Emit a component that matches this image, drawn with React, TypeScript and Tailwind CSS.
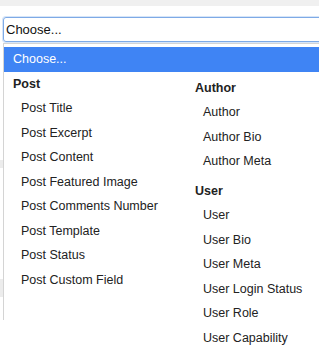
const groupsLeft = [
  {
    label: 'Post',
    items: [
      'Post Title',
      'Post Excerpt',
      'Post Content',
      'Post Featured Image',
      'Post Comments Number',
      'Post Template',
      'Post Status',
      'Post Custom Field',
    ],
  },
]

const groupsRight = [
  { label: 'Author', items: ['Author', 'Author Bio', 'Author Meta'] },
  {
    label: 'User',
    items: ['User', 'User Bio', 'User Meta', 'User Login Status', 'User Role', 'User Capability'],
  },
]

type Group = { label: string; items: string[] }

function OptGroup({ group, first }: { group: Group; first?: boolean }) {
  return (
    <div className={first ? '' : 'mt-[5px]'}>
      <div className="h-[24.5px] flex items-center pl-[9px] font-bold text-[#222]">{group.label}</div>
      {group.items.map((item) => (
        <div key={item} className="h-[24.5px] flex items-center pl-[17px] text-[#222] whitespace-nowrap">
          {item}
        </div>
      ))}
    </div>
  )
}

export default function App() {
  return (
    <div
      className="relative w-[319px] h-[357px] overflow-hidden bg-white text-[12.5px]"
      style={{ fontFamily: '"Liberation Sans", Arial, sans-serif' }}
    >
      {/* page strip at top */}
      <div className="h-[6px] bg-[#f0f0f0]" />

      <div className="pl-[3px] pt-[11px]">
        {/* select box */}
        <div className="h-[25px] w-[330px] rounded-[3px] border border-[#7eaae6] shadow-[0_0_0_1px_#d6e5f8] flex items-center pl-[2px] text-[13px] text-[#111]">
          Choose...
        </div>

        <div className="flex">
          {/* dropdown list */}
          <div className="mt-[1px] w-[340px] h-[277px] border-l border-t border-[#d4d4d4] pt-[3px]">
            <div className="h-[25px] ml-[0px] bg-[#3f84f4] text-white flex items-center pl-[9px]">Choose...</div>
            <div className="flex">
              <div className="w-[182px]">
                {groupsLeft.map((g, i) => (
                  <OptGroup key={g.label} group={g} first={i === 0} />
                ))}
              </div>
              <div className="pt-[4px]">
                {groupsRight.map((g, i) => (
                  <OptGroup key={g.label} group={g} first={i === 0} />
                ))}
              </div>
            </div>
          </div>
        </div>
      </div>

      {/* bits of the page peeking out behind the list */}
      <div className="absolute left-0 top-[160px] w-[3px] h-[8px] bg-[#ececec]" />
      <div className="absolute left-0 top-[279px] w-[3px] h-[18px] bg-[#ececec]" />
    </div>
  )
}
